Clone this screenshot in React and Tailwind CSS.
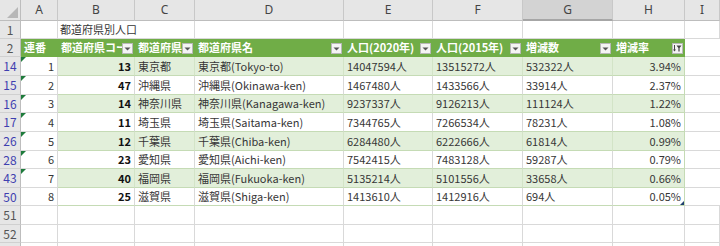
import React from "react";

const FONT = { fontFamily: '"Noto Sans CJK JP", "Noto Sans", sans-serif' };

const W = ["w-[37px]", "w-[77px]", "w-[60px]", "w-[149px]", "w-[89px]", "w-[90px]", "w-[90px]", "w-[72px]", "w-[35px]"];
const LETTERS = ["A", "B", "C", "D", "E", "F", "G", "H", "I"];

const DATA = [
  ["14", "1", "13", "東京都", "東京都(Tokyo-to)", "14047594人", "13515272人", "532322人", "3.94%"],
  ["15", "2", "47", "沖縄県", "沖縄県(Okinawa-ken)", "1467480人", "1433566人", "33914人", "2.37%"],
  ["16", "3", "14", "神奈川県", "神奈川県(Kanagawa-ken)", "9237337人", "9126213人", "111124人", "1.22%"],
  ["17", "4", "11", "埼玉県", "埼玉県(Saitama-ken)", "7344765人", "7266534人", "78231人", "1.08%"],
  ["26", "5", "12", "千葉県", "千葉県(Chiba-ken)", "6284480人", "6222666人", "61814人", "0.99%"],
  ["28", "6", "23", "愛知県", "愛知県(Aichi-ken)", "7542415人", "7483128人", "59287人", "0.79%"],
  ["43", "7", "40", "福岡県", "福岡県(Fukuoka-ken)", "5135214人", "5101556人", "33658人", "0.66%"],
  ["50", "8", "25", "滋賀県", "滋賀県(Shiga-ken)", "1413610人", "1412916人", "694人", "0.05%"],
];
const DATA_H = ["h-[19px]", "h-[19px]", "h-[18px]", "h-[19px]", "h-[19px]", "h-[18px]", "h-[19px]", "h-[18px]"];

const HEADERS = ["連番", "都道府県コー", "都道府県", "都道府県名", "人口(2020年)", "人口(2015年)", "増減数", "増減率"];

function RowHead({ n, blue, h }) {
  return (
    <div
      className={`${h} w-[21px] shrink-0 flex items-center justify-center bg-[#e6e6e6] border-r border-b border-r-[#bdbdbd] border-b-[#d0d0d0] text-[12px] ${blue ? "text-[#3f3fb0]" : "text-[#555]"}`}
    >
      {n}
    </div>
  );
}

function DropBtn() {
  return (
    <div className="absolute right-[2px] top-[4px] w-[11px] h-[11px] bg-[#f4f4f4] border border-[#b8b8b8] flex items-center justify-center">
      <svg width="7" height="4" viewBox="0 0 7 4">
        <path d="M0.5 0.5 L6.5 0.5 L3.5 3.5 Z" fill="#555" />
      </svg>
    </div>
  );
}

function FilterBtn() {
  return (
    <div className="absolute right-[2px] top-[4px] w-[11px] h-[11px] bg-[#f4f4f4] border border-[#b8b8b8] flex items-center justify-center">
      <svg width="9" height="7" viewBox="0 0 9 7">
        <path d="M1.5 0 V6" stroke="#444" strokeWidth="1" />
        <path d="M0 4.5 L1.5 6.5 L3 4.5 Z" fill="#444" />
        <path d="M3.5 0.5 H8.5 L6.6 3 V6.5 H5.4 V3 Z" fill="#444" />
      </svg>
    </div>
  );
}

export default function App() {
  return (
    <div className="w-[720px] h-[246px] overflow-hidden bg-white text-[11px] text-[#363636]" style={FONT}>
      {/* column letters */}
      <div className="flex h-[21px]">
        <div className="w-[21px] shrink-0 relative bg-[#e6e6e6] border-r border-b border-[#bdbdbd]">
          <svg className="absolute right-[2px] bottom-[2px]" width="11" height="11" viewBox="0 0 11 11">
            <path d="M11 0 L11 11 L0 11 Z" fill="#b7b7b7" />
          </svg>
        </div>
        {LETTERS.map((l, i) => (
          <div
            key={l}
            className={`${W[i]} shrink-0 flex items-center justify-center border-r border-r-[#c8c8c8] text-[12px] text-[#444] ${
              l === "G" ? "bg-[#d3d3d3] border-b-2 border-b-[#a6a6a6]" : "bg-[#e6e6e6] border-b border-b-[#bdbdbd]"
            }`}
            style={{ fontFamily: '"Noto Sans", sans-serif' }}
          >
            {l}
          </div>
        ))}
      </div>

      {/* row 1 */}
      <div className="flex h-[18px]">
        <RowHead n="1" h="h-[18px]" />
        <div className="w-[37px] shrink-0 border-r border-b border-[#d9d9d9]" />
        <div className="w-[137px] shrink-0 border-r border-b border-[#d9d9d9] pl-[2px] flex items-center whitespace-nowrap">
          都道府県別人口
        </div>
        {W.slice(3).map((w, i) => (
          <div key={i} className={`${w} shrink-0 border-r border-b border-[#d9d9d9]`} />
        ))}
      </div>

      {/* row 2 header */}
      <div className="flex h-[18px]">
        <RowHead n="2" h="h-[18px]" />
        {HEADERS.map((t, i) => (
          <div
            key={i}
            className={`${W[i]} shrink-0 relative bg-[#70ad47] border-b border-b-[#70ad47] text-white font-bold pl-[3px] flex items-center whitespace-nowrap overflow-hidden`}
          >
            {t}
            {i === 7 ? <FilterBtn /> : i > 0 ? <DropBtn /> : null}
          </div>
        ))}
        <div className="w-[35px] shrink-0 border-b border-[#d9d9d9]" />
      </div>

      {/* data rows */}
      {DATA.map((r, ri) => {
        const band = ri % 2 === 0;
        const h = DATA_H[ri];
        const cellBase = band
          ? "bg-[#e2efda] border-r border-r-[#d3e4c7] border-b border-b-[#c5dbb5]"
          : "bg-white border-r border-r-[#d9d9d9] border-b border-b-[#c5dbb5]";
        return (
          <div key={ri} className={`flex ${h}`}>
            <RowHead n={r[0]} blue h={h} />
            <div className={`${W[0]} shrink-0 relative bg-white border-r border-b border-[#d9d9d9] flex items-center justify-end pr-[3px]`}>
              {ri < 7 && (
                <svg className="absolute left-0 top-0" width="5" height="5" viewBox="0 0 5 5">
                  <path d="M0 0 H5 L0 5 Z" fill="#1e7b3c" />
                </svg>
              )}
              {r[1]}
            </div>
            <div className={`${W[1]} shrink-0 ${cellBase} flex items-center justify-end pr-[3px] font-bold text-[#111]`}>{r[2]}</div>
            <div className={`${W[2]} shrink-0 ${cellBase} flex items-center pl-[3px] whitespace-nowrap`}>{r[3]}</div>
            <div className={`${W[3]} shrink-0 ${cellBase} flex items-center pl-[3px] whitespace-nowrap`}>{r[4]}</div>
            <div className={`${W[4]} shrink-0 ${cellBase} flex items-center pl-[3px] whitespace-nowrap`}>{r[5]}</div>
            <div className={`${W[5]} shrink-0 ${cellBase} flex items-center pl-[3px] whitespace-nowrap`}>{r[6]}</div>
            <div className={`${W[6]} shrink-0 ${cellBase} flex items-center pl-[3px] whitespace-nowrap`}>{r[7]}</div>
            <div className={`${W[7]} shrink-0 relative ${band ? "bg-[#e2efda]" : "bg-white"} border-r border-r-[#c5dbb5] border-b border-b-[#c5dbb5] flex items-center justify-end pr-[3px]`}>
              {r[8]}
              {ri === 7 && (
                <svg className="absolute right-0 bottom-0" width="4" height="4" viewBox="0 0 4 4">
                  <path d="M4 0 V4 H0 Z" fill="#1f3f6e" />
                </svg>
              )}
            </div>
            <div className={`${W[8]} shrink-0 border-b border-[#d9d9d9]`} />
          </div>
        );
      })}

      {/* empty rows */}
      {[
        ["51", "h-[19px]"],
        ["52", "h-[18px]"],
        ["", "h-[18px]"],
      ].map(([n, h], k) => (
        <div key={k} className={`flex ${h}`}>
          <RowHead n={n} h={h} />
          {W.map((w, i) => (
            <div key={i} className={`${w} shrink-0 border-r border-b border-[#d9d9d9]`} />
          ))}
        </div>
      ))}
    </div>
  );
}
